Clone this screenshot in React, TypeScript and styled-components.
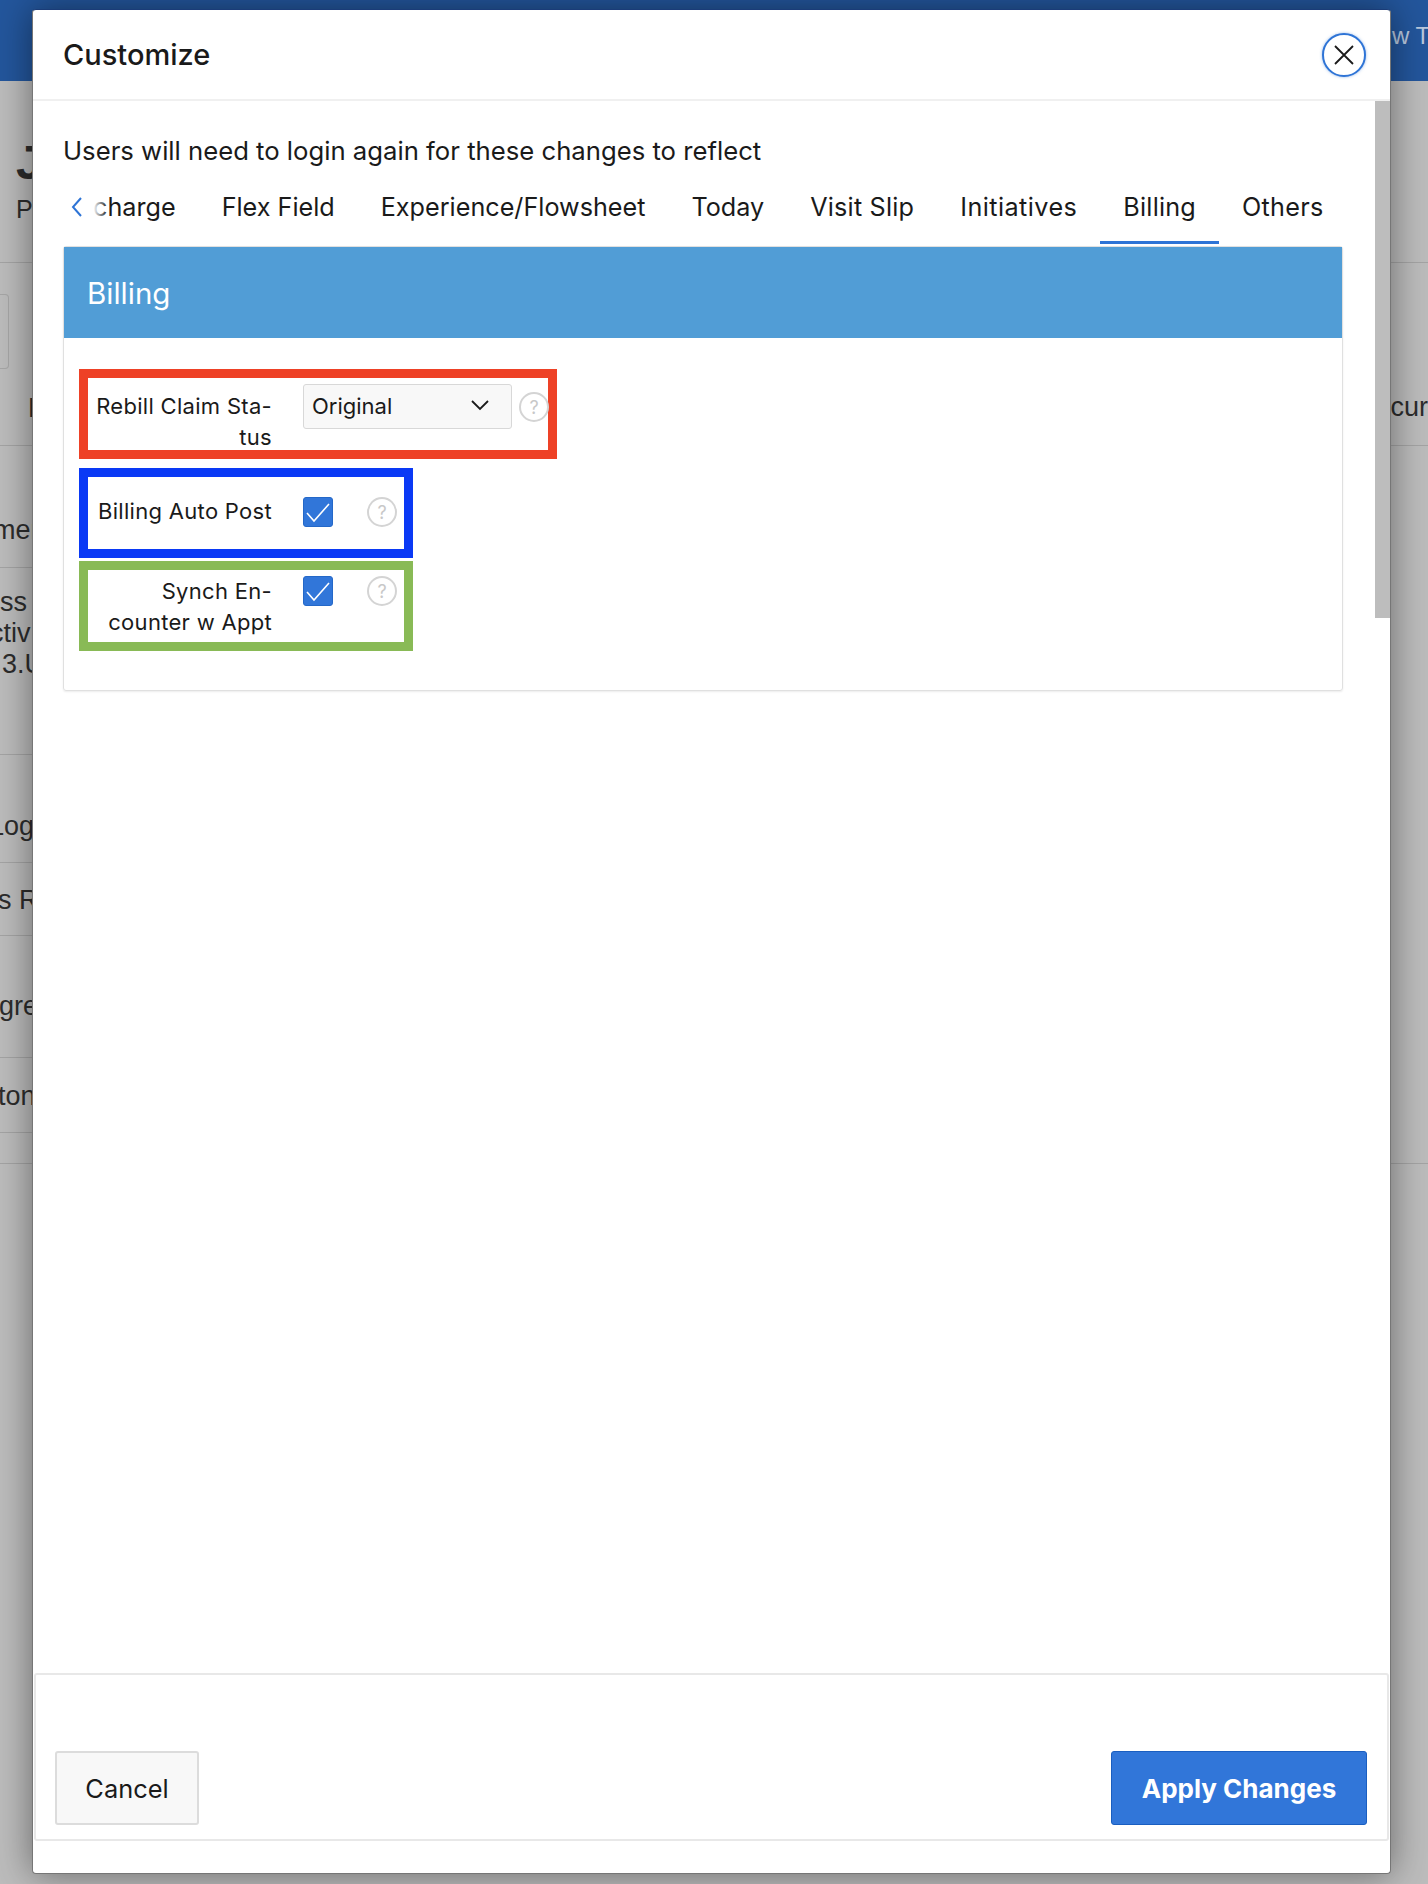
import styled, { createGlobalStyle } from "styled-components";

const GlobalStyle = createGlobalStyle`
    html, body {
        margin: 0;
        padding: 0;
    }
    * {
        box-sizing: border-box;
    }
`;

const Page = styled.div`
    position: relative;
    width: 1428px;
    height: 1884px;
    overflow: hidden;
    background-color: #bcbcbc;
    font-family: Inter, "Liberation Sans", sans-serif;
    color: #1a1a1a;
`;
const TopBar = styled.div`
    height: 81px;
    background-color: #23569c;
    color: #b9c8de;
    font-family: "Liberation Sans", sans-serif;
    font-size: 24px;
    line-height: 72px;
    padding-left: 1392px;
    white-space: nowrap;
`;
const BehindTitle = styled.div`
    height: 182px;
    border-bottom: 1px solid #a4a4a4;
    padding: 58px 0 0 16px;
    font-family: "Liberation Sans", sans-serif;
    color: #2c2c2c;
`;
const BigLetter = styled.div`
    font-size: 48px;
    line-height: 48px;
    font-weight: 700;
`;
const SmallLetter = styled.div`
    margin-top: 7px;
    font-size: 25px;
    line-height: 30px;
`;
const BehindRow = styled.div<{ $height: number; $pad?: number; $narrow?: boolean }>`
    height: ${({ $height }) => $height}px;
    width: ${({ $narrow }) => ($narrow ? "100px" : "100%")};
    padding-top: ${({ $pad }) => $pad ?? 0}px;
    border-bottom: 1px solid #a4a4a4;
    display: flex;
    justify-content: space-between;
    font-family: "Liberation Sans", sans-serif;
    font-size: 27px;
    line-height: 31px;
    color: #2c2c2c;
    white-space: nowrap;
`;
const BehindLine = styled.div<{ $shift?: number }>`
    margin-left: ${({ $shift }) => $shift ?? 0}px;
`;
const FilterBox = styled.div`
    width: 9px;
    height: 75px;
    border: 1px solid #a6a6a6;
    border-left: none;
    border-radius: 0 4px 4px 0;
    margin-bottom: 24px;
`;
const RightText = styled.div`
    padding-top: 98px;
`;
const Modal = styled.div`
    position: absolute;
    left: 32px;
    top: 9px;
    width: 1359px;
    height: 1865px;
    background-color: #ffffff;
    border: 1px solid #767676;
    border-top-color: #1a3c78;
    border-radius: 4px;
    box-shadow: 0 0 36px rgba(0, 0, 0, 0.45);
    display: flex;
    flex-direction: column;
`;
const ModalHeader = styled.div`
    height: 91px;
    flex: none;
    border-bottom: 2px solid #f0f0f0;
    display: flex;
    align-items: center;
    justify-content: space-between;
    padding: 0 24px 0 30px;
`;
const Title = styled.h1`
    margin: 0;
    font-size: 29px;
    font-weight: 500;
`;
const CloseButton = styled.button`
    width: 44px;
    height: 44px;
    padding: 0;
    border: 2px solid #2e74d6;
    border-radius: 50%;
    background: #ffffff;
    box-shadow: 0 0 3px rgba(46, 116, 214, 0.5);
    display: flex;
    align-items: center;
    justify-content: center;
`;
const ModalBody = styled.div`
    flex: 1;
    display: flex;
    min-height: 0;
`;
const BodyContent = styled.div`
    flex: 1;
    min-width: 0;
    padding: 34px 32px 0 30px;
`;
const Notice = styled.div`
    font-size: 25.7px;
    line-height: 32px;
`;
const Tabs = styled.div`
    display: flex;
    height: 64px;
    margin-top: 15px;
    position: relative;
`;
const Tab = styled.div<{ $active?: boolean; $spacing?: number }>`
    position: relative;
    height: 62px;
    padding: 9px 23px 0;
    font-size: 25.2px;
    line-height: 32px;
    letter-spacing: ${({ $spacing }) => $spacing ?? 0}px;
    white-space: nowrap;
    border-bottom: 3px solid ${({ $active }) => ($active ? "#2e74d6" : "transparent")};
`;
const FirstTab = styled(Tab)`
    padding-left: 30px;
    &::after {
        content: "";
        position: absolute;
        left: 25px;
        top: 0;
        width: 20px;
        height: 100%;
        background: linear-gradient(90deg, #ffffff 25%, rgba(255, 255, 255, 0));
    }
`;
const BackArrow = styled.div`
    position: absolute;
    left: 7px;
    top: 14px;
`;
const Panel = styled.section`
    border: 1px solid #e0e0e0;
    border-radius: 3px;
    box-shadow: 0 1px 2px rgba(0, 0, 0, 0.08);
    height: 445px;
`;
const PanelHeading = styled.div`
    height: 91px;
    background-color: #519dd6;
    color: #ffffff;
    font-size: 29.5px;
    font-weight: 400;
    display: flex;
    align-items: center;
    padding-left: 23px;
`;
const FieldList = styled.div`
    padding: 31px 0 0 15px;
    display: flex;
    flex-direction: column;
    align-items: flex-start;
`;
const Field = styled.div<{ $color: string; $width: number; $gap: number }>`
    width: ${({ $width }) => $width}px;
    height: 90px;
    border: 9px solid ${({ $color }) => $color};
    margin-bottom: ${({ $gap }) => $gap}px;
    display: flex;
    align-items: flex-start;
`;
const FieldLabel = styled.label<{ $top: number }>`
    width: 184px;
    flex: none;
    padding-top: ${({ $top }) => $top}px;
    text-align: right;
    font-size: 22px;
    line-height: 31px;
    letter-spacing: 0.3px;
`;
const SelectBox = styled.div`
    margin: 6px 0 0 31px;
    width: 209px;
    height: 45px;
    flex: none;
    background-color: #f8f8f8;
    border: 1px solid #d8d8d8;
    border-radius: 3px;
    display: flex;
    align-items: center;
    justify-content: space-between;
    padding: 0 22px 2px 8px;
    font-size: 22px;
`;
const CheckBox = styled.div<{ $top: number }>`
    margin: ${({ $top }) => $top}px 0 0 31px;
    width: 30px;
    height: 30px;
    flex: none;
    background-color: #3176d9;
    border: 1px solid #2468c8;
    border-radius: 3px;
    display: flex;
    align-items: center;
    justify-content: center;
`;
const HelpIcon = styled.div<{ $top: number; $left: number }>`
    margin: ${({ $top }) => $top}px 0 0 ${({ $left }) => $left}px;
    width: 30px;
    height: 30px;
    flex: none;
    border: 2px solid #d4d4d4;
    border-radius: 50%;
    color: #c8c8c8;
    font-size: 18px;
    display: flex;
    align-items: center;
    justify-content: center;
`;
const Scrollbar = styled.div`
    width: 15px;
    flex: none;
    background: linear-gradient(#bdbdbd, #bdbdbd) no-repeat top / 100% 517px;
`;
const Footer = styled.div`
    flex: none;
    height: 168px;
    margin: 0 1px 32px;
    border: 2px solid #e8e8e8;
    border-radius: 3px;
    display: flex;
    align-items: flex-end;
    justify-content: space-between;
    padding: 0 20px 14px 19px;
`;
const CancelButton = styled.button`
    width: 144px;
    height: 74px;
    background-color: #f8f8f8;
    border: 2px solid #dcdcdc;
    border-radius: 3px;
    font-family: inherit;
    font-size: 25.4px;
    color: #1a1a1a;
`;
const ApplyButton = styled.button`
    width: 256px;
    height: 74px;
    background-color: #3176d9;
    border: 1px solid #1a5ec0;
    border-radius: 3px;
    font-family: inherit;
    font-size: 26px;
    font-weight: 700;
    color: #ffffff;
`;

const Check = () => (
    <svg width="26" height="22" viewBox="0 0 26 22" fill="none" stroke="#ffffff" strokeWidth="1.6">
        <path d="M2 12l7 8L24 3" />
    </svg>
);

const App = () => {
    return (
        <Page>
            <GlobalStyle />
            <TopBar>w T</TopBar>
            <BehindTitle>
                <BigLetter>J</BigLetter>
                <SmallLetter>P</SmallLetter>
            </BehindTitle>
            <BehindRow $height={183} $pad={31}>
                <div>
                    <FilterBox />
                    <BehindLine $shift={28}>E</BehindLine>
                </div>
                <RightText>cur</RightText>
            </BehindRow>
            <BehindRow $height={122} $pad={69} $narrow>
                <BehindLine $shift={-7}>mer</BehindLine>
            </BehindRow>
            <BehindRow $height={187} $pad={19} $narrow>
                <div>
                    <BehindLine>ss</BehindLine>
                    <BehindLine $shift={-10}>ctiv</BehindLine>
                    <BehindLine $shift={2}>3.U</BehindLine>
                </div>
            </BehindRow>
            <BehindRow $height={108} $pad={56} $narrow>
                <BehindLine $shift={-11}>Log</BehindLine>
            </BehindRow>
            <BehindRow $height={73} $pad={22} $narrow>
                <BehindLine $shift={-2}>s R</BehindLine>
            </BehindRow>
            <BehindRow $height={122} $pad={55} $narrow>
                <BehindLine $shift={-1}>gre</BehindLine>
            </BehindRow>
            <BehindRow $height={75} $pad={23} $narrow>
                <BehindLine $shift={-2}>ton</BehindLine>
            </BehindRow>
            <BehindRow $height={31} />
            <Modal>
                <ModalHeader>
                    <Title>Customize</Title>
                    <CloseButton aria-label="Close">
                        <svg width="22" height="22" viewBox="0 0 22 22" stroke="#1a1a1a" strokeWidth="1.8">
                            <path d="M2 2l18 18M20 2L2 20" />
                        </svg>
                    </CloseButton>
                </ModalHeader>
                <ModalBody>
                    <BodyContent>
                        <Notice>Users will need to login again for these changes to reflect</Notice>
                        <Tabs>
                            <BackArrow>
                                <svg width="14" height="22" viewBox="0 0 14 22" fill="none" stroke="#2e74d6" strokeWidth="2">
                                    <path d="M11 2L3 11l8 9" />
                                </svg>
                            </BackArrow>
                            <FirstTab>charge</FirstTab>
                            <Tab>Flex Field</Tab>
                            <Tab>Experience/Flowsheet</Tab>
                            <Tab>Today</Tab>
                            <Tab $spacing={0.2}>Visit Slip</Tab>
                            <Tab $spacing={0.45}>Initiatives</Tab>
                            <Tab $active $spacing={0.2}>Billing</Tab>
                            <Tab $spacing={0.3}>Others</Tab>
                        </Tabs>
                        <Panel>
                            <PanelHeading>Billing</PanelHeading>
                            <FieldList>
                                <Field $color="#ee4126" $width={478} $gap={9}>
                                    <FieldLabel $top={13}>Rebill Claim Sta-<br />tus</FieldLabel>
                                    <SelectBox>
                                        Original
                                        <svg width="18" height="11" viewBox="0 0 18 11" fill="none" stroke="#1a1a1a" strokeWidth="1.8">
                                            <path d="M1 1l8 8 8-8" />
                                        </svg>
                                    </SelectBox>
                                    <HelpIcon $top={14} $left={7}>?</HelpIcon>
                                </Field>
                                <Field $color="#0a39f5" $width={334} $gap={3}>
                                    <FieldLabel $top={19}>Billing Auto Post</FieldLabel>
                                    <CheckBox $top={20}><Check /></CheckBox>
                                    <HelpIcon $top={20} $left={34}>?</HelpIcon>
                                </Field>
                                <Field $color="#89ba56" $width={334} $gap={0}>
                                    <FieldLabel $top={6}>Synch En-<br />counter w Appt</FieldLabel>
                                    <CheckBox $top={6}><Check /></CheckBox>
                                    <HelpIcon $top={6} $left={34}>?</HelpIcon>
                                </Field>
                            </FieldList>
                        </Panel>
                    </BodyContent>
                    <Scrollbar />
                </ModalBody>
                <Footer>
                    <CancelButton>Cancel</CancelButton>
                    <ApplyButton>Apply Changes</ApplyButton>
                </Footer>
            </Modal>
        </Page>
    );
};

export default App;
